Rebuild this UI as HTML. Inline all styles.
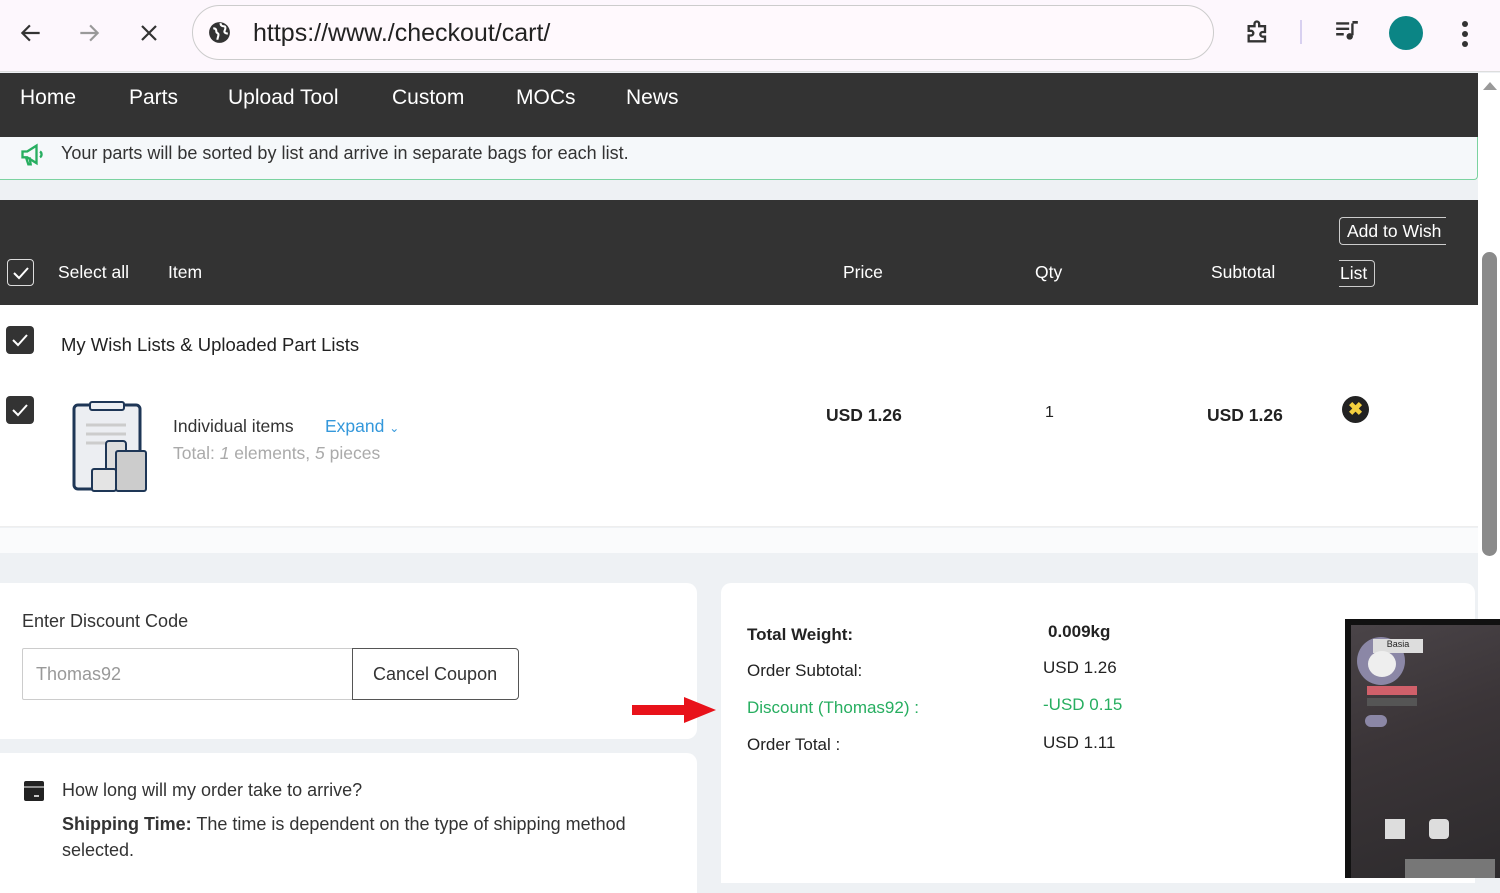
<!DOCTYPE html>
<html><head><meta charset="utf-8"><style>
*{box-sizing:border-box;margin:0;padding:0}
body{width:1500px;height:878px;overflow:hidden;position:relative;font-family:"Liberation Sans",sans-serif;background:#eef1f4;color:#222}
.a{position:absolute}
</style></head><body>
<!-- browser bar -->
<div class="a" style="left:0;top:0;width:1500px;height:72px;background:#fdf7fd;border-bottom:1px solid #ddd"></div>
<svg class="a" style="left:18px;top:20px" width="26" height="26" viewBox="0 0 24 24"><path d="M20 12H5M11 5l-7 7 7 7" fill="none" stroke="#333" stroke-width="2"/></svg>
<svg class="a" style="left:76px;top:20px" width="26" height="26" viewBox="0 0 24 24"><path d="M4 12h15M13 5l7 7-7 7" fill="none" stroke="#999" stroke-width="2"/></svg>
<svg class="a" style="left:137px;top:21px" width="24" height="24" viewBox="0 0 24 24"><path d="M5 5l14 14M19 5L5 19" fill="none" stroke="#333" stroke-width="2.2"/></svg>
<div class="a" style="left:192px;top:5px;width:1022px;height:55px;border:1px solid #ccc;border-radius:28px;background:#fff9fd"></div>
<svg class="a" style="left:207px;top:20px" width="25" height="25" viewBox="0 0 24 24"><circle cx="12" cy="12" r="10" fill="#333"/><path d="M6 8c2 0 3 1 3 3s2 1 2 3-1 3-1 5M13 3c0 2 1 3 3 3s2 2 1 4 1 3 3 3" fill="none" stroke="#fff" stroke-width="2"/></svg>
<div class="a" style="left:253px;top:19px;font-size:25px;color:#222">https://www./checkout/cart/</div>
<svg class="a" style="left:1243px;top:18px" width="30" height="28" viewBox="0 0 24 24"><path d="M4 7h5V5a2 2 0 014 0v2h5v5h-2a2 2 0 000 4h2v4H4v-5h2a2 2 0 000-4H4z" fill="none" stroke="#333" stroke-width="2"/></svg>
<div class="a" style="left:1300px;top:20px;width:2px;height:24px;background:#d8d0f0"></div>
<svg class="a" style="left:1333px;top:18px" width="28" height="26" viewBox="0 0 24 24"><path d="M2 5h12M2 10h12M2 15h7" stroke="#333" stroke-width="2.2"/><path d="M17 5v11" stroke="#333" stroke-width="2.2"/><path d="M17 4h5" stroke="#333" stroke-width="2.5"/><circle cx="14.5" cy="17" r="3" fill="#333"/></svg>
<div class="a" style="left:1389px;top:16px;width:34px;height:34px;border-radius:50%;background:#0b8585"></div>
<div class="a" style="left:1462px;top:21px;width:6px;height:6px;border-radius:50%;background:#333;box-shadow:0 10px 0 #333,0 20px 0 #333"></div>
<!-- nav -->
<div class="a" style="left:0;top:73px;width:1478px;height:65px;background:#333"></div>
<div class="a" style="top:86px;left:0;color:#fff;font-size:21px;white-space:nowrap">
<span class="a" style="left:20px">Home</span><span class="a" style="left:129px">Parts</span><span class="a" style="left:228px">Upload Tool</span><span class="a" style="left:392px">Custom</span><span class="a" style="left:516px">MOCs</span><span class="a" style="left:626px">News</span></div>
<!-- scrollbar -->
<div class="a" style="left:1478px;top:73px;width:22px;height:805px;background:#fff"></div>
<div class="a" style="left:1483px;top:82px;width:0;height:0;border-left:7px solid transparent;border-right:7px solid transparent;border-bottom:8px solid #999"></div>
<div class="a" style="left:1482px;top:252px;width:15px;height:304px;background:#8a8a8a;border-radius:8px"></div>
<!-- notice -->
<div class="a" style="left:0;top:137px;width:1478px;height:43px;background:#f5f8fa;border-right:1.5px solid #7bd3a0;border-bottom:1.5px solid #7bd3a0;border-radius:0 0 4px 0"></div>
<svg class="a" style="left:19px;top:141px" width="28" height="28" viewBox="0 0 24 24"><path d="M3 9h4l8-5v15l-8-5H3zM6 14l2 6h2l-1-6M18 9a3 3 0 010 5" fill="none" stroke="#27ae60" stroke-width="2"/></svg>
<div class="a" style="left:61px;top:143px;font-size:18px;color:#333">Your parts will be sorted by list and arrive in separate bags for each list.</div>
<!-- table header -->
<div class="a" style="left:0;top:200px;width:1478px;height:105px;background:#333"></div>
<div class="a" style="left:7px;top:259px;width:27px;height:27px;border:1.5px solid #ddd;border-radius:4px"></div>
<svg class="a" style="left:11px;top:263px" width="20" height="20" viewBox="0 0 20 20"><path d="M3 10l5 5 9-10" fill="none" stroke="#fff" stroke-width="2"/></svg>
<div class="a" style="top:262px;left:0;color:#fff;font-size:17.5px;white-space:nowrap">
<span class="a" style="left:58px">Select all</span><span class="a" style="left:168px">Item</span><span class="a" style="left:843px">Price</span><span class="a" style="left:1035px">Qty</span><span class="a" style="left:1211px">Subtotal</span></div>
<div class="a" style="left:1339px;top:217px;width:107px;height:28px;border:1px solid #ccc;border-right:none;border-radius:4px 0 0 4px;color:#fff;font-size:17.5px;padding:3px 0 0 7px;white-space:nowrap">Add to Wish</div>
<div class="a" style="left:1339px;top:260px;width:36px;height:27px;border:1px solid #ccc;border-left:none;border-radius:0 4px 4px 0;color:#fff;font-size:17.5px;padding:2px 0 0 1px">List</div>
<!-- items -->
<div class="a" style="left:0;top:305px;width:1478px;height:222px;background:#fff;border-bottom:1px solid #eee"></div>
<div class="a" style="left:0;top:528px;width:1478px;height:25px;background:#fafbfc"></div>
<div class="a" style="left:6px;top:326px;width:28px;height:28px;background:#333;border-radius:4px"></div>
<svg class="a" style="left:10px;top:330px" width="20" height="20" viewBox="0 0 20 20"><path d="M3 10l5 5 9-10" fill="none" stroke="#fff" stroke-width="2"/></svg>
<div class="a" style="left:61px;top:334px;font-size:18.5px;color:#222">My Wish Lists &amp; Uploaded Part Lists</div>
<div class="a" style="left:6px;top:396px;width:28px;height:28px;background:#333;border-radius:4px"></div>
<svg class="a" style="left:10px;top:400px" width="20" height="20" viewBox="0 0 20 20"><path d="M3 10l5 5 9-10" fill="none" stroke="#fff" stroke-width="2"/></svg>
<svg class="a" style="left:72px;top:401px" width="78" height="93" viewBox="0 0 78 93"><rect x="2" y="4" width="66" height="84" rx="4" fill="#eceef2" stroke="#1e3656" stroke-width="3"/><rect x="18" y="1" width="34" height="8" rx="2" fill="#eceef2" stroke="#1e3656" stroke-width="2"/><path d="M14 24h40M14 33h40M14 42h30" stroke="#ccc" stroke-width="3"/><rect x="34" y="40" width="20" height="48" rx="3" fill="#ddd" stroke="#1e3656" stroke-width="2"/><rect x="44" y="50" width="30" height="40" rx="2" fill="#ccc" stroke="#1e3656" stroke-width="2"/><rect x="20" y="68" width="24" height="22" rx="2" fill="#e4e4e4" stroke="#1e3656" stroke-width="2"/></svg>
<div class="a" style="left:173px;top:416px;font-size:17.5px;color:#333">Individual items</div>
<div class="a" style="left:325px;top:416px;font-size:17.5px;color:#3498db">Expand <span style="font-size:12px">&#8964;</span></div>
<div class="a" style="left:173px;top:443px;font-size:17.5px;color:#aaa">Total: <i>1</i> elements, <i>5</i> pieces</div>
<div class="a" style="left:826px;top:405px;font-size:17.5px;font-weight:bold;color:#222">USD 1.26</div>
<div class="a" style="left:1045px;top:404px;font-size:16px;color:#222">1</div>
<div class="a" style="left:1207px;top:405px;font-size:17.5px;font-weight:bold;color:#222">USD 1.26</div>
<div class="a" style="left:1342px;top:396px;width:27px;height:27px;border-radius:50%;background:#222;color:#f4d03f;font-size:18px;font-weight:bold;text-align:center;line-height:27px">✖</div>
<!-- discount card -->
<div class="a" style="left:0;top:583px;width:697px;height:156px;background:#fff;border-radius:0 10px 10px 0"></div>
<div class="a" style="left:22px;top:611px;font-size:18px;color:#333">Enter Discount Code</div>
<div class="a" style="left:22px;top:648px;width:331px;height:52px;border:1px solid #ccc;border-radius:2px 0 0 2px;font-size:18px;color:#999;padding:15px 0 0 13px">Thomas92</div>
<div class="a" style="left:352px;top:648px;width:167px;height:52px;border:1px solid #555;border-radius:0 4px 4px 0;font-size:18px;color:#333;padding:15px 0 0 20px">Cancel Coupon</div>
<!-- shipping card -->
<div class="a" style="left:0;top:753px;width:697px;height:140px;background:#fff;border-radius:0 10px 0 0"></div>
<svg class="a" style="left:23px;top:780px" width="22" height="22" viewBox="0 0 22 22"><rect x="1" y="1" width="20" height="20" rx="2" fill="#222"/><path d="M1 7h20" stroke="#fff" stroke-width="1"/><path d="M11 16h5" stroke="#fff" stroke-width="1.5"/></svg>
<div class="a" style="left:62px;top:780px;font-size:18px;color:#333">How long will my order take to arrive?</div>
<div class="a" style="left:62px;top:811px;width:620px;font-size:18px;color:#333;line-height:26px"><b>Shipping Time:</b> The time is dependent on the type of shipping method selected.</div>
<!-- arrow -->
<svg class="a" style="left:630px;top:694px" width="88" height="32" viewBox="0 0 88 32"><path d="M2 11h52V3l32 13-32 13v-8H2z" fill="#e8121a"/></svg>
<!-- summary -->
<div class="a" style="left:721px;top:583px;width:754px;height:300px;background:#fff;border-radius:10px 10px 0 0"></div>
<div class="a" style="left:747px;top:625px;font-size:17px;font-weight:bold;color:#222">Total Weight:</div>
<div class="a" style="left:1048px;top:622px;font-size:17px;font-weight:bold;color:#222">0.009kg</div>
<div class="a" style="left:747px;top:661px;font-size:17px;color:#222">Order Subtotal:</div>
<div class="a" style="left:1043px;top:658px;font-size:17px;color:#222">USD 1.26</div>
<div class="a" style="left:747px;top:698px;font-size:17px;color:#27ae60">Discount (Thomas92) :</div>
<div class="a" style="left:1043px;top:695px;font-size:17px;color:#27ae60">-USD 0.15</div>
<div class="a" style="left:747px;top:735px;font-size:17px;color:#222">Order Total :</div>
<div class="a" style="left:1043px;top:733px;font-size:17px;color:#222">USD 1.11</div>
<!-- game overlay -->
<div class="a" style="left:1345px;top:619px;width:155px;height:259px;background:#111;overflow:hidden">
<div class="a" style="left:6px;top:6px;width:160px;height:260px;background:linear-gradient(160deg,#4a4448,#3b3538 40%,#2c2a2c)"></div>
<div class="a" style="left:12px;top:18px;width:48px;height:48px;border-radius:50%;background:#8b87a6"></div>
<div class="a" style="left:28px;top:20px;width:50px;height:14px;background:#ddd;font-size:9px;color:#222;text-align:center">Basia</div>
<div class="a" style="left:23px;top:32px;width:28px;height:26px;border-radius:50%;background:#eee"></div>
<div class="a" style="left:22px;top:67px;width:50px;height:9px;background:#d0606a"></div>
<div class="a" style="left:22px;top:79px;width:50px;height:8px;background:#555"></div>
<div class="a" style="left:20px;top:96px;width:22px;height:12px;border-radius:6px;background:#8b87a6"></div>
<div class="a" style="left:40px;top:200px;width:20px;height:20px;background:#ddd"></div>
<div class="a" style="left:84px;top:200px;width:20px;height:20px;background:#ddd;border-radius:4px"></div>
<div class="a" style="left:60px;top:240px;width:90px;height:25px;background:#777"></div>
</div>
</body></html>
